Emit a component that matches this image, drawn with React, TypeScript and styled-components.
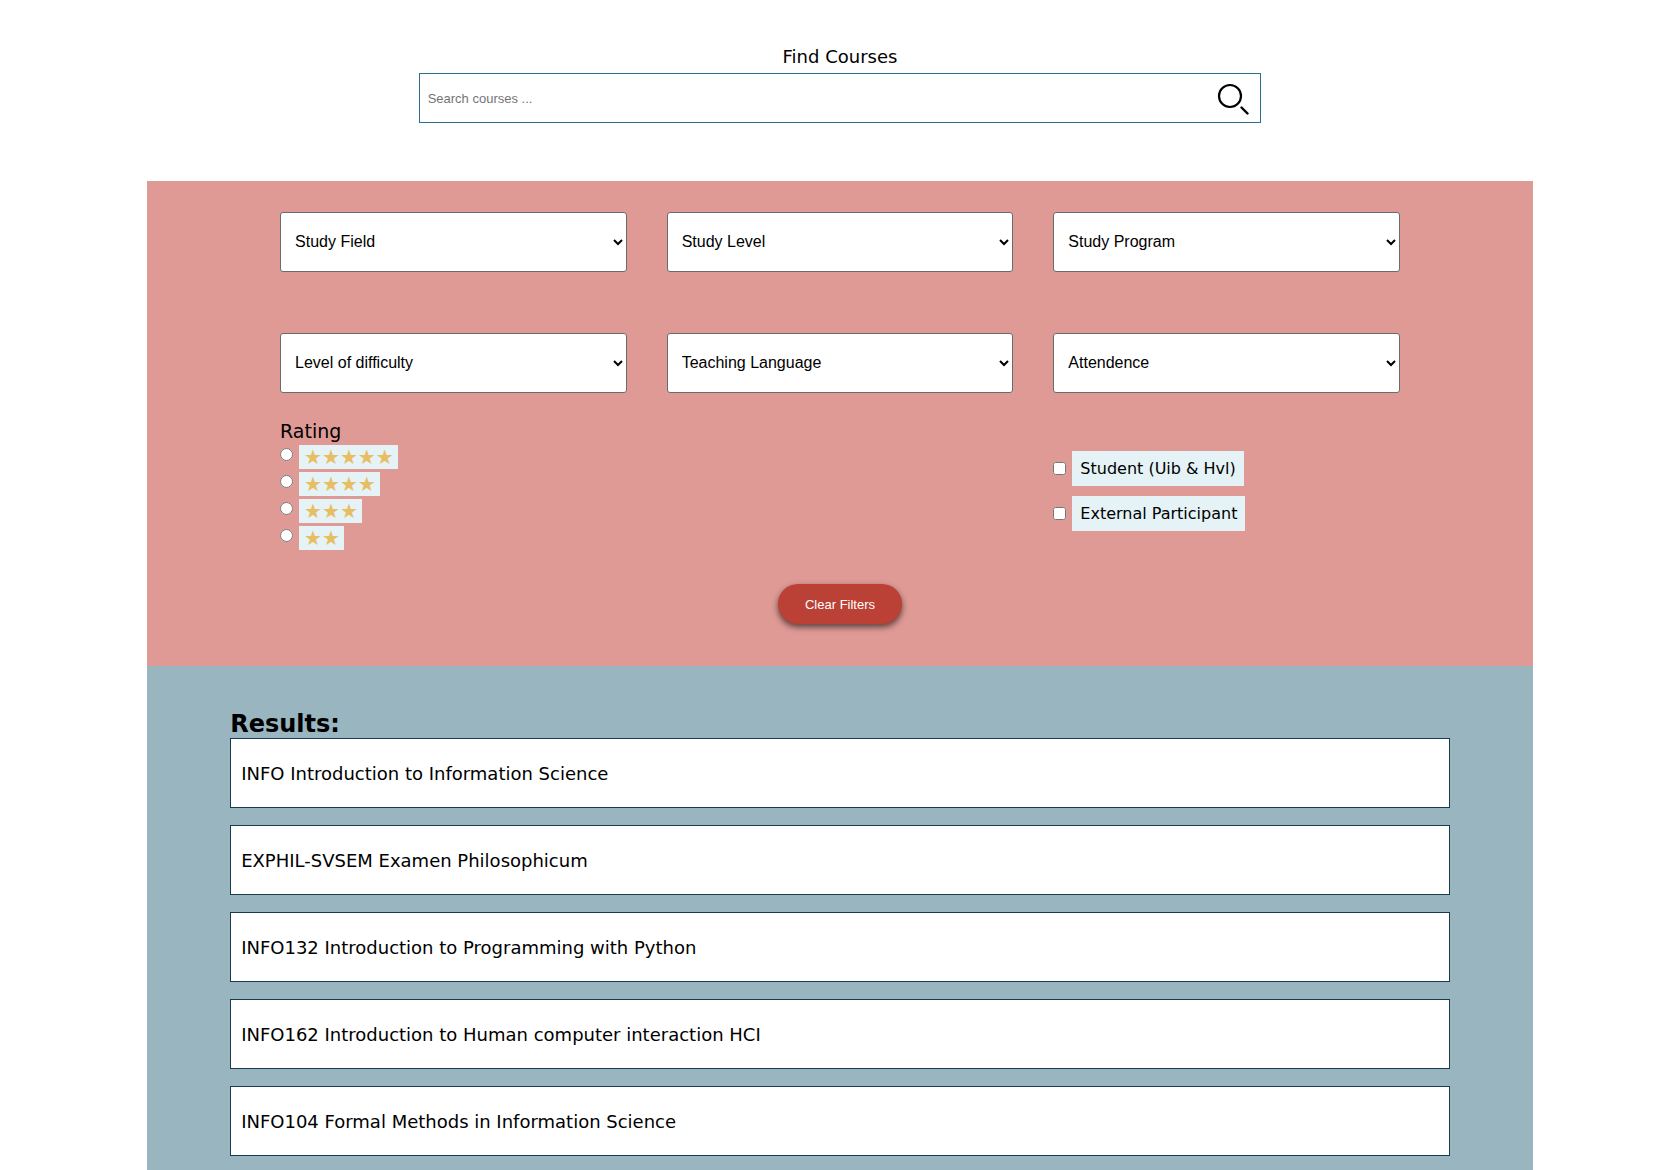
import React, { useState } from "react";
import styled, { createGlobalStyle } from "styled-components";

const GlobalStyle = createGlobalStyle`
  * { box-sizing: border-box; }
  body {
    margin: 0;
    background: #fff;
    color: #000;
    font-family: Verdana, "DejaVu Sans", sans-serif;
    font-size: 18px;
    line-height: 24px;
  }
`;

const controlFont = `Arial, "Liberation Sans", sans-serif`;

const Page = styled.main`
  display: flex;
  flex-direction: column;
  min-height: 100vh;
  padding: 0 145px 0 147px;
`;

const SearchForm = styled.form`
  display: flex;
  flex-direction: column;
  gap: 4px;
  padding: 45px 19.6% 58px;
`;

const SearchLabel = styled.label`
  text-align: center;
`;

const SearchBox = styled.div`
  display: flex;
  align-items: center;
  height: 50px;
  border: 1px solid #2a6f91;
  background: #fff;
`;

const SearchInput = styled.input`
  flex: 1;
  min-width: 0;
  height: 100%;
  padding: 0 8px;
  border: 0;
  outline: 0;
  background: transparent;
  font-family: ${controlFont};
  font-size: 13px;
  &::placeholder { color: #757575; }
`;

const SearchButton = styled.button`
  display: flex;
  padding: 2px 11px 0;
  border: 0;
  background: transparent;
  cursor: pointer;
`;

const Filters = styled.section`
  display: flex;
  flex-direction: column;
  padding: 31px 9.6% 42px;
  background: #df9a96;
`;

const FilterGrid = styled.div`
  display: grid;
  grid-template-columns: repeat(3, minmax(0, 1fr));
  gap: 61px 40px;
`;

const ChoiceGrid = styled(FilterGrid)`
  margin-top: 26px;
`;

const Select = styled.select`
  width: 100%;
  height: 60px;
  padding: 10px 10px 12px;
  border: 1px solid #6b6b6b;
  border-radius: 3px;
  background-color: #fff;
  color: #000;
  font-family: ${controlFont};
  font-size: 16px;
`;

const RatingGroup = styled.fieldset`
  display: flex;
  flex-direction: column;
  gap: 3px;
  min-width: 0;
  margin: 0;
  padding: 0;
  border: 0;
`;

const RatingTitle = styled.legend`
  padding: 0 0 2px;
  font-size: 19px;
`;

const ParticipantGroup = styled.div`
  display: flex;
  flex-direction: column;
  grid-column: 3;
  gap: 10px;
  padding-top: 32px;
`;

const Choice = styled.div`
  display: flex;
  align-items: center;
  gap: 6px;
`;

const RatingChoice = styled(Choice)`
  align-items: flex-start;
`;

const Tick = styled.input`
  width: 13px;
  height: 13px;
  margin: 0;
`;

const Radio = styled(Tick)`
  margin-top: 3px;
`;

const StarLabel = styled.label`
  height: 24px;
  padding: 0 4px 0 5px;
  background: #e5f2f6;
  color: #e7be62;
  font-family: "DejaVu Sans", sans-serif;
  font-size: 20px;
  line-height: 24px;
`;

const TickLabel = styled.label`
  padding: 8px;
  background: #e5f2f6;
  font-size: 16px;
  line-height: 19px;
`;

const ClearButton = styled.button`
  align-self: center;
  height: 40px;
  margin-top: 34px;
  padding: 0 27px;
  border: 0;
  border-radius: 20px;
  background: #bb4036;
  box-shadow: 0 3px 6px rgba(0, 0, 0, 0.6);
  color: #fff;
  font-family: ${controlFont};
  font-size: 13px;
  cursor: pointer;
`;

const Results = styled.section`
  flex: 1;
  padding: 45px 6% 14px;
  background: #99b5c0;
`;

const ResultsTitle = styled.h2`
  margin: 0;
  font-size: 24px;
  line-height: 27px;
`;

const CourseList = styled.ul`
  display: flex;
  flex-direction: column;
  gap: 17px;
  margin: 0;
  padding: 0;
  list-style: none;
`;

const Course = styled.li`
  display: flex;
  align-items: center;
  height: 70px;
  padding: 2px 10px 0;
  border: 1px solid #1a3b4d;
  background: #fff;
`;

const filters = [
  "Study Field",
  "Study Level",
  "Study Program",
  "Level of difficulty",
  "Teaching Language",
  "Attendence",
];

const participants = ["Student (Uib & Hvl)", "External Participant"];

const courses = [
  "INFO Introduction to Information Science",
  "EXPHIL-SVSEM Examen Philosophicum",
  "INFO132 Introduction to Programming with Python",
  "INFO162 Introduction to Human computer interaction HCI",
  "INFO104 Formal Methods in Information Science",
];

export default function App() {
  const [query, setQuery] = useState("");
  const [rating, setRating] = useState(0);
  const [ticked, setTicked] = useState<string[]>([]);

  const toggle = (name: string) =>
    setTicked((now) => (now.includes(name) ? now.filter((n) => n !== name) : [...now, name]));

  const clear = () => {
    setRating(0);
    setTicked([]);
  };

  return (
    <>
      <GlobalStyle />
      <Page>
        <SearchForm onSubmit={(e) => e.preventDefault()}>
          <SearchLabel htmlFor="search">Find Courses</SearchLabel>
          <SearchBox>
            <SearchInput
              id="search"
              type="text"
              placeholder="Search courses ..."
              value={query}
              onChange={(e) => setQuery(e.target.value)}
            />
            <SearchButton type="submit" aria-label="Search">
              <svg width="32" height="32" viewBox="0 0 32 32" fill="none" stroke="#000">
                <circle cx="13" cy="13" r="11" strokeWidth="2.2" />
                <path d="M24.5 24.5L30.5 30.5" strokeWidth="2.4" strokeLinecap="round" />
              </svg>
            </SearchButton>
          </SearchBox>
        </SearchForm>

        <Filters>
          <FilterGrid>
            {filters.map((name) => (
              <Select key={name} aria-label={name}>
                <option>{name}</option>
              </Select>
            ))}
          </FilterGrid>
          <ChoiceGrid>
            <RatingGroup>
              <RatingTitle>Rating</RatingTitle>
              {[5, 4, 3, 2].map((n) => (
                <RatingChoice key={n}>
                  <Radio
                    type="radio"
                    name="rating"
                    id={`rating-${n}`}
                    checked={rating === n}
                    onChange={() => setRating(n)}
                  />
                  <StarLabel htmlFor={`rating-${n}`}>{"★".repeat(n)}</StarLabel>
                </RatingChoice>
              ))}
            </RatingGroup>
            <ParticipantGroup>
              {participants.map((name, i) => (
                <Choice key={name}>
                  <Tick
                    type="checkbox"
                    id={`participant-${i}`}
                    checked={ticked.includes(name)}
                    onChange={() => toggle(name)}
                  />
                  <TickLabel htmlFor={`participant-${i}`}>{name}</TickLabel>
                </Choice>
              ))}
            </ParticipantGroup>
          </ChoiceGrid>
          <ClearButton type="button" onClick={clear}>Clear Filters</ClearButton>
        </Filters>

        <Results>
          <ResultsTitle>Results:</ResultsTitle>
          <CourseList>
            {courses.map((name) => (
              <Course key={name}>{name}</Course>
            ))}
          </CourseList>
        </Results>
      </Page>
    </>
  );
}
